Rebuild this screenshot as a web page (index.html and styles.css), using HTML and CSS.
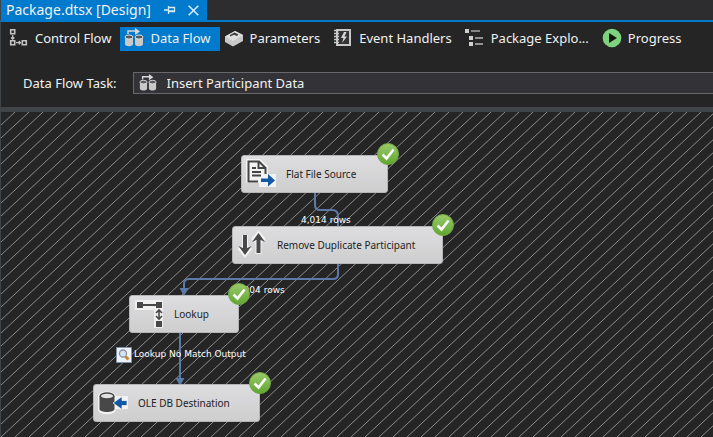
FILE: index.html
```html
<!DOCTYPE html>
<html lang="en">
<head>
<meta charset="utf-8">
<title>Package.dtsx [Design]</title>
<link rel="stylesheet" href="styles.css">
</head>
<body>
<svg class="defs" aria-hidden="true">
  <defs>
    <linearGradient id="green" x1="0" y1="0" x2="0" y2="1">
      <stop offset="0" stop-color="#9ccb6c"/>
      <stop offset="1" stop-color="#5fa62f"/>
    </linearGradient>
    <symbol id="dataflow" viewBox="0 0 20 20">
      <path d="M4 6V3h8" fill="none" stroke="#d8d8d8" stroke-width="1.5"/>
      <path d="M11 0l5 3.5-5 3.5z" fill="#d8d8d8"/>
      <path d="M1 9v7c0 3 8 3 8 0V9zM11 9v7c0 3 8 3 8 0V9z" fill="#c9c9c9"/>
      <ellipse cx="5" cy="9" rx="4" ry="2" fill="#55585c" stroke="#dedede"/>
      <ellipse cx="15" cy="9" rx="4" ry="2" fill="#55585c" stroke="#dedede"/>
    </symbol>
    <symbol id="check" viewBox="0 0 22 22">
      <circle cx="11" cy="11" r="10.5" fill="url(#green)" stroke="#6fa544"/>
      <path d="M5.5 11.5l4 4 7-9" fill="none" stroke="#fff" stroke-width="2.6"/>
    </symbol>
  </defs>
</svg>
<header class="doc-tabs">
  <div class="doc-tab">
    <span class="doc-title">Package.dtsx [Design]</span>
    <button class="tool" aria-label="Pin"><svg width="12" height="10" viewBox="0 0 12 10"><path d="M0 5h4M4.500 1v8M5 2.500h5.500v4H5M5 6h5.500" fill="none" stroke="#d5ebfb" stroke-width="1.3"/></svg></button>
    <button class="tool" aria-label="Close"><svg width="11" height="11" viewBox="0 0 11 11"><path d="M.7.7l9.600 9.600M10.300.7L.7 10.300" stroke="#d5ebfb" stroke-width="1.600"/></svg></button>
  </div>
</header>
<main class="designer">
  <nav class="tabs">
    <button class="tab"><svg width="20" height="20" viewBox="0 0 20 20"><g fill="none" stroke="#c4c4c4" stroke-width="1.600"><path d="M1.700 1.700h4v4h-4zM1.700 12.700h4v4h-4zM13.300 12.700h4v4h-4z"/><path d="M3.700 7v4M2 9.500l1.700 1.700 1.700-1.700M7 14.700h4.500M9.800 13l1.700 1.700-1.700 1.700" stroke-width="1.300"/></g></svg>Control Flow</button>
    <button class="tab active"><svg width="20" height="20"><use href="#dataflow"/></svg>Data Flow</button>
    <button class="tab"><svg width="20" height="20" viewBox="0 0 20 20"><path d="M1 8.500l10-5.500 8 4v6l-10 5.500-8-4.500z" fill="#c8c8c8"/><path d="M1 8.500l10-5.500 8 4-10 6z" fill="#dedede"/><path d="M6 8.500V7l4.500-2.500L14.500 6.500 13 8l-3-1.200z" fill="#3c3c3e"/></svg>Parameters</button>
    <button class="tab"><svg width="20" height="20" viewBox="0 0 20 20"><path d="M4 2h13v15H4z" fill="#343436" stroke="#c8c8c8" stroke-width="2"/><path d="M1 2.500h5M1 5.500h5M1 8.500h5M1 11.500h5M1 14.500h5" stroke="#c8c8c8" stroke-width="1.300"/><path d="M11 4l-3 6h2.500L9 15l5-6.500h-2.600L13.500 4z" fill="#d8d8d8"/></svg>Event Handlers</button>
    <button class="tab"><svg width="20" height="20" viewBox="0 0 20 20"><path d="M0 1h4v4H0zM4 8h4v4H4zM4 14h4v4H4z" fill="#d0d0d0"/><path d="M6 3h9" stroke="#858585" stroke-width="2"/><path d="M10 10h8M10 16h8" stroke="#b8b8b8" stroke-width="1.300"/></svg>Package Explo...</button>
    <button class="tab"><svg width="20" height="20" viewBox="0 0 20 20"><circle cx="10" cy="10" r="9.300" fill="#7ed27e"/><path d="M7 5l8 5-8 5z" fill="#101510"/></svg>Progress</button>
  </nav>
  <div class="task-row">
    <label for="task">Data Flow Task:</label>
    <div class="task-box">
      <svg width="18" height="18" aria-hidden="true"><use href="#dataflow"/></svg>
      <select id="task"><option>Insert Participant Data</option></select>
    </div>
  </div>
  <section class="canvas" aria-label="Data flow design surface">
    <svg class="surface" aria-hidden="true">
      <defs>
        <pattern id="hatch" width="14" height="13" patternUnits="userSpaceOnUse">
          <path d="M-1 13.930L15-.930M-1 .930L1-.930M13 13.930l2-1.860" stroke="#8a8a8a" stroke-width="1"/>
        </pattern>
      </defs>
      <rect width="100%" height="100%" fill="url(#hatch)"/>
      <g fill="none" stroke="#5b7aa8" stroke-width="2">
        <path d="M314 80v13q0 5 5 5h12q6 0 6 6v11"/>
        <path d="M337 150v12q0 5-5 5H188q-5 0-5 5v6"/>
        <path d="M179 220v48"/>
      </g>
      <path d="M178.500 176h9L183 184zM174.500 266h9L179 274z" fill="#5b7aa8"/>
    </svg>
    <span class="flow-label rows-one">4,014 rows</span>
    <span class="flow-label rows-two">3,904 rows</span>
    <span class="flow-label lookup-label">Lookup No Match Output</span>
    <svg class="viewer" width="16" height="16" viewBox="0 0 16 16"><path d="M.5.5h15v15H.5z" fill="#eef2f7" stroke="#7d91ad"/><circle cx="7" cy="6.500" r="3.500" fill="#d6e5f5" stroke="#8792a1" stroke-width="1.300"/><path d="M9.500 9.500l3 3" stroke="#c58a3c" stroke-width="3"/></svg>

    <div class="node source">
      <svg class="glyph" width="30" height="30" viewBox="0 0 30 30"><path d="M0 0h14l8 7v8h8v13H13v-4H0z" fill="#f2f2f2"/><path d="M12 22.500H2.500v-20H13l6.500 6.500v6M12.500 2.500V9h6.500M6 9h4M6 13h9M6 16.500h9" fill="none" stroke="#444" stroke-width="2"/><path d="M15 19.500h7v-4.500l7 6.500-7 6v-4.500h-7z" fill="#1158a5"/></svg>
      <span>Flat File Source</span><svg class="badge" width="22" height="22"><use href="#check"/></svg>
    </div>
    <div class="node duplicate">
      <svg class="glyph" width="30" height="30" viewBox="0 0 30 30"><path d="M8 5v17M3 17l5 6 5-6M21.500 24V6M16.500 11l5-6 5 6" fill="none" stroke="#f4f4f4" stroke-width="6"/><path d="M8 5v16M21.500 23V7" stroke="#484848" stroke-width="4"/><path d="M1.500 16l6.500 9 6.500-9-6.500 3zM15 12l6.500-9 6.500 9-6.500-3z" fill="#484848"/></svg>
      <span>Remove Duplicate Participant</span><svg class="badge" width="22" height="22"><use href="#check"/></svg>
    </div>
    <div class="node lookup">
      <svg class="glyph" width="30" height="30" viewBox="0 0 30 30"><path d="M1 1h28v28h-9V11H1z" fill="#efefef"/><path d="M3 3h6v6H3zM22 3h6v6h-6zM22 22h6v6h-6z" fill="#484848"/><path d="M9 6h13" stroke="#484848" stroke-width="2"/><path d="M25 11v9M22 14l3-3 3 3M22 17l3 3 3-3" fill="none" stroke="#484848" stroke-width="1.600"/></svg>
      <span>Lookup</span><svg class="badge" width="22" height="22"><use href="#check"/></svg>
    </div>
    <div class="node destination">
      <svg class="glyph" width="30" height="30" viewBox="0 0 30 30"><path d="M0 8c0-6 17-6 18 0h12v13H18c0 7-18 7-18 0z" fill="#f2f2f2"/><path d="M1.500 8v13c0 4 15 4 15 0V8z" fill="#484848"/><ellipse cx="9" cy="8" rx="6.800" ry="3" fill="#e2e2e2" stroke="#484848" stroke-width="1.500"/><path d="M29 12.500h-5V8.500l-9 6.500 9 6.500v-4h5z" fill="#1158a5" stroke="#f2f2f2" stroke-width=".8"/></svg>
      <span>OLE DB Destination</span><svg class="badge" width="22" height="22"><use href="#check"/></svg>
    </div>
  </section>
</main>
</body>
</html>
```
FILE: styles.css
```css
* { box-sizing: border-box; }

body {
  margin: 0;
  min-height: 100vh;
  display: flex;
  flex-direction: column;
  background: #252526;
  color: #f1f1f1;
  font: 13px/20px "Noto Sans", sans-serif;
}

.defs { position: absolute; width: 0; height: 0; }
button, select { font: inherit; color: inherit; border: 0; background: none; padding: 0; margin: 0; }

.doc-tabs {
  display: flex;
  background: #2d2d30;
  border-bottom: 2px solid #007acc;
  border-left: 1px solid #3f4449;
}
.doc-tab {
  display: flex;
  align-items: center;
  height: 20px;
  padding: 0 8px 0 5px;
  background: #007acc;
}
.doc-title { font-size: 14px; line-height: 18px; margin-right: 13px; white-space: nowrap; }
.tool { display: flex; margin-right: 12px; }
.tool:last-child { margin-right: 0; }

.designer {
  flex: 1;
  display: flex;
  flex-direction: column;
  border-left: 1px solid #3f4449;
}
.tabs { display: flex; padding: 5px 0 0 4px; white-space: nowrap; }
.tab {
  display: flex;
  align-items: center;
  gap: 6px;
  height: 24px;
  padding: 0 9px 3px 4px;
}
.tab svg { flex: none; }
.active { background: #007acc; }

.task-row {
  display: flex;
  align-items: center;
  gap: 16px;
  padding: 21px 0 13px 22px;
}
.task-box {
  flex: 1;
  display: flex;
  align-items: center;
  height: 22px;
  gap: 10px;
  padding-left: 5px;
  background: #333337;
  border: 1px solid #68686c;
  border-right: 0;
}
select { flex: 1; appearance: none; outline: 0; }

.canvas {
  position: relative;
  flex: 1;
  min-height: 330px;
  border-top: 5px solid #3f4449;
  overflow: hidden;
  font: 10px/12px "Noto Sans", sans-serif;
}
.surface { position: absolute; inset: 0; width: 100%; height: 100%; }

.node {
  position: absolute;
  display: flex;
  align-items: center;
  height: 38px;
  padding-left: 4px;
  gap: 10px;
  background: linear-gradient(#dddddf, #cececf);
  border: 1px solid #b5b5b8;
  border-radius: 3px;
  color: #222;
  white-space: nowrap;
}
.badge { position: absolute; top: -13px; right: -12px; }
.source { left: 240px; top: 43px; width: 147px; }
.duplicate { left: 231px; top: 114px; width: 211px; }
.lookup { left: 128px; top: 183px; width: 110px; }
.destination { left: 92px; top: 272px; width: 167px; }

.flow-label {
  position: absolute;
  color: #fff;
  font: 9px/12px "DejaVu Sans", sans-serif;
  white-space: nowrap;
}
.rows-one { left: 300px; top: 102px; }
.rows-two { left: 234px; top: 172px; }
.lookup-label { left: 133px; top: 236px; }
.viewer { position: absolute; left: 115px; top: 235px; }
```
